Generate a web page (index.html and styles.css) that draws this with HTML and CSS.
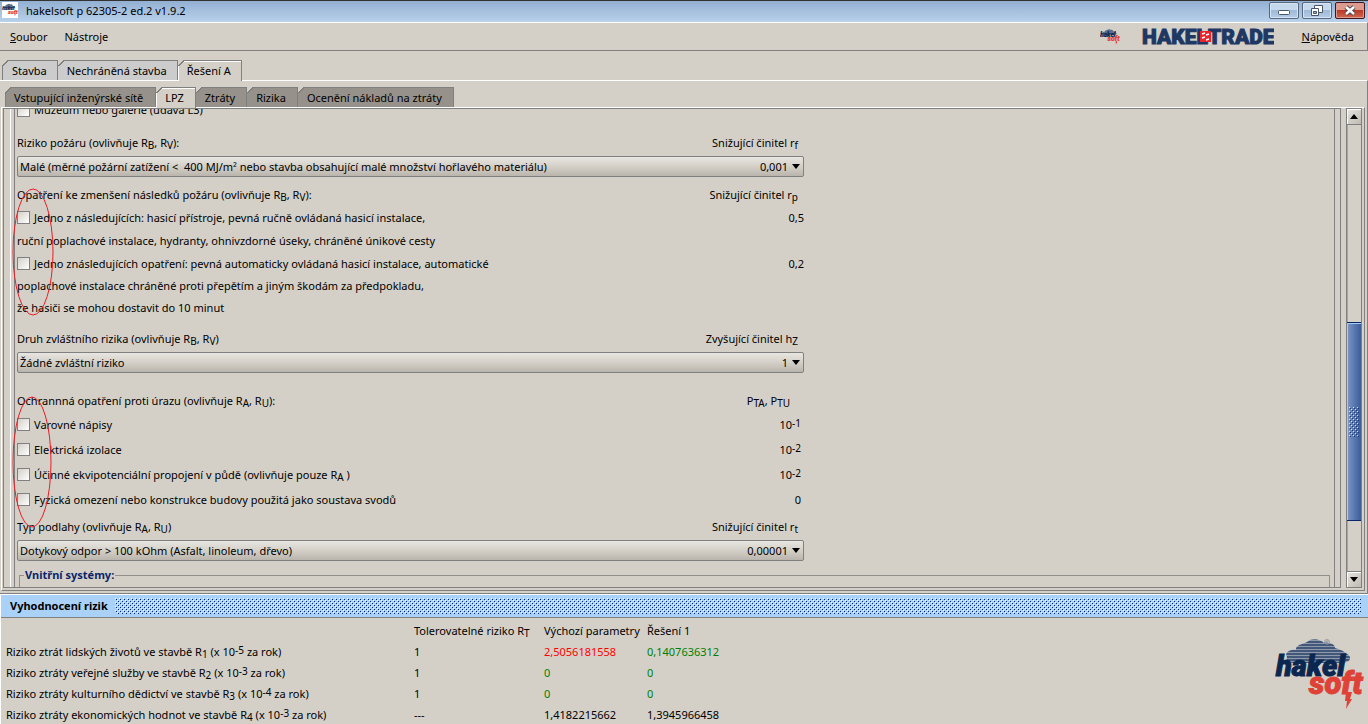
FILE: index.html
```html
<!DOCTYPE html>
<html lang="cs">
<head>
<meta charset="utf-8">
<title>hakelsoft p 62305-2 ed.2 v1.9.2</title>
<link rel="stylesheet" href="styles.css">
</head>
<body>
<svg class="defs" aria-hidden="true">
  <defs>
    <pattern id="stripes" width="4" height="3" patternUnits="userSpaceOnUse"><rect width="4" height="3" fill="#8e9aa9"/><rect width="4" height="2" fill="#42577a"/></pattern>
    <pattern id="grip" width="4" height="4" patternUnits="userSpaceOnUse"><path fill="#fff" d="M0 0h1v1H0zM2 2h1v1H2z"/><path fill="#0a246a" d="M1 1h1v1H1zM3 3h1v1H3z"/></pattern>
    <symbol id="logo" viewBox="0 0 90 72">
      <path d="M12 19C9 15 15 11 21 12 20 7 28 6 32 4c6-5 14-2 17 1 9-1 11 3 11 5 9 3 12 5 15 9 1 5-6 6-10 6H20c-6 0-9-2-8-6z" fill="url(#stripes)"/>
      <text x="1" y="38" font-size="29" fill="#0b2750" stroke="#0b2750">hakel</text>
      <text x="34" y="56" font-size="31" fill="#df4136" stroke="#df4136">soft</text>
      <path d="M71 54h6l-2 7h2l-6 10 1-8h-2z" fill="#df4136"/>
      <circle cx="52" cy="4" r="2.500" fill="none" stroke="#7c8797" stroke-width=".7"/>
      <path d="M51 6V3h2v1l-2 1 2 1" fill="none" stroke="#7c8797" stroke-width=".6"/>
    </symbol>
  </defs>
</svg>
<header class="titlebar">
  <svg class="app-icon" viewBox="0 -9 90 90"><rect y="-9" width="90" height="90" fill="#fff"/><use href="#logo" width="90" height="72"/></svg>
  <h1>hakelsoft p 62305-2 ed.2 v1.9.2</h1>
  <div class="window-buttons">
    <button aria-label="Minimalizovat"><svg viewBox="0 0 28 15"><rect x="8.500" y="7.500" width="11" height="4" rx="1" fill="#fff" stroke="#4b5568"/></svg></button>
    <button aria-label="Obnovit"><svg viewBox="0 0 28 15"><path d="M11.500 2.500h8v7h-8z" fill="#fff" stroke="#4b5568"/><path d="M8.500 5.500h7v7h-7z" fill="#fff" stroke="#4b5568"/><path d="M10.500 8.500h3v2h-3z" fill="#8fb0d8" stroke="#4b5568"/></svg></button>
    <button class="close" aria-label="Zavřít"><svg viewBox="0 0 28 15"><path d="M10 4l8 7M18 4l-8 7" stroke="#4b4550" stroke-width="4.500"/><path d="M10 4l8 7M18 4l-8 7" stroke="#fff" stroke-width="2.500"/></svg></button>
  </div>
</header>
<nav class="menubar">
  <button><u>S</u>oubor</button>
  <button>Nástroje</button>
  <span class="spacer"></span>
  <svg class="mini-logo" viewBox="0 0 90 72"><use href="#logo" width="90" height="72"/></svg>
  <svg class="trade-logo" viewBox="0 0 132 22">
    <text x="0" y="18">HAKEL</text><text x="66" y="18">TRADE</text>
    <rect x="58" y="5" width="11" height="11" fill="#e8252b"/>
    <path d="M60 8l3-1M64 9l3-1M60 12l3-1M64 14l3-1" stroke="#fff" stroke-width="1.500"/>
  </svg>
  <button><u>N</u>ápověda</button>
</nav>
<div class="tabs outer-tabs" role="tablist">
  <button role="tab">Stavba</button>
  <button role="tab">Nechráněná stavba</button>
  <button role="tab" aria-selected="true">Řešení A</button>
</div>
<main class="workspace">
  <div class="tabs inner-tabs" role="tablist">
    <button role="tab">Vstupující inženýrské sítě</button>
    <button role="tab" aria-selected="true">LPZ</button>
    <button role="tab">Ztráty</button>
    <button role="tab">Rizika</button>
    <button role="tab">Ocenění nákladů na ztráty</button>
  </div>
  <div class="panel">
    <div class="viewport">
      <form class="form">
        <div class="row clipped"><label><input type="checkbox">Muzeum nebo galerie (udává L3)</label></div>

        <div class="row head first"><label for="fire">Riziko požáru (ovlivňuje R<sub>B</sub>, R<sub>V</sub>):</label><span>Snižující činitel r<sub>f</sub></span></div>
        <div class="combo">
          <select id="fire"><option>Malé (měrné požární zatížení &lt; &nbsp;400 MJ/m² nebo stavba obsahující malé množství hořlavého materiálu)</option></select>
          <output>0,001</output><svg viewBox="0 0 8 5"><path d="M0 0h8L4 5z"/></svg>
        </div>

        <div class="row head measures"><span>Opatření ke zmenšení následků požáru (ovlivňuje R<sub>B</sub>, R<sub>V</sub>):</span><span>Snižující činitel r<sub>p</sub></span></div>
        <div class="row"><label><input type="checkbox">Jedno z následujících: hasicí přístroje, pevná ručně ovládaná hasicí instalace,</label><span>0,5</span></div>
        <p class="row">ruční poplachové instalace, hydranty, ohnivzdorné úseky, chráněné únikové cesty</p>
        <div class="row"><label><input type="checkbox">Jedno znásledujících opatření: pevná automaticky ovládaná hasicí instalace, automatické</label><span>0,2</span></div>
        <p class="row tight">poplachové instalace chráněné proti přepětím a jiným škodám za předpokladu,</p>
        <p class="row tight">že hasiči se mohou dostavit do 10 minut</p>

        <div class="row head special"><label for="special">Druh zvláštního rizika (ovlivňuje R<sub>B</sub>, R<sub>V</sub>)</label><span>Zvyšující činitel h<sub>Z</sub></span></div>
        <div class="combo">
          <select id="special"><option>Žádné zvláštní riziko</option></select>
          <output>1</output><svg viewBox="0 0 8 5"><path d="M0 0h8L4 5z"/></svg>
        </div>

        <div class="row head injury"><span>Ochrannná opatření proti úrazu (ovlivňuje R<sub>A</sub>, R<sub>U</sub>):</span><span>P<sub>TA</sub>, P<sub>TU</sub></span></div>
        <div class="row tall"><label><input type="checkbox">Varovné nápisy</label><span>10<sup>-1</sup></span></div>
        <div class="row tall"><label><input type="checkbox">Elektrická izolace</label><span>10<sup>-2</sup></span></div>
        <div class="row tall"><label><input type="checkbox"><span>Účinné ekvipotenciální propojení v půdě (ovlivňuje pouze R<sub>A</sub> )</span></label><span>10<sup>-2</sup></span></div>
        <div class="row tall"><label><input type="checkbox">Fyzická omezení nebo konstrukce budovy použitá jako soustava svodů</label><span>0</span></div>

        <div class="row head floor"><label for="floor">Typ podlahy (ovlivňuje R<sub>A</sub>, R<sub>U</sub>)</label><span>Snižující činitel r<sub>t</sub></span></div>
        <div class="combo">
          <select id="floor"><option>Dotykový odpor &gt; 100 kOhm (Asfalt, linoleum, dřevo)</option></select>
          <output>0,00001</output><svg viewBox="0 0 8 5"><path d="M0 0h8L4 5z"/></svg>
        </div>
        <fieldset><legend>Vnitřní systémy:</legend></fieldset>
      </form>
      <svg class="marks" viewBox="0 0 60 480"><ellipse cx="29" cy="143" rx="20" ry="63"/><ellipse cx="28" cy="353" rx="19" ry="65"/></svg>
    </div>
    <div class="scrollbar">
      <button type="button" aria-label="Nahoru"><svg viewBox="0 0 8 5"><path d="M0 5h8L4 0z"/></svg></button>
      <div class="track"><div class="thumb"><svg width="10" height="30"><rect width="10" height="30" fill="url(#grip)" opacity=".75"/></svg></div></div>
      <button type="button" aria-label="Dolů"><svg viewBox="0 0 8 5"><path d="M0 0h8L4 5z"/></svg></button>
    </div>
  </div>
</main>
<section class="results">
  <header><h2>Vyhodnocení rizik</h2><svg class="dots" width="100%" height="16"><rect width="100%" height="16" fill="url(#grip)"/></svg></header>
  <div class="results-body">
    <table>
      <thead><tr><th class="name"></th><th class="limit">Tolerovatelné riziko R<sub>T</sub></th><th class="base">Výchozí parametry</th><th>Řešení 1</th></tr></thead>
      <tbody>
        <tr><td>Riziko ztrát lidských životů ve stavbě R<sub>1</sub> (x 10<sup>-5</sup> za rok)</td><td>1</td><td class="bad">2,5056181558</td><td class="good">0,1407636312</td></tr>
        <tr><td>Riziko ztráty veřejné služby ve stavbě R<sub>2</sub> (x 10<sup>-3</sup> za rok)</td><td>1</td><td class="good">0</td><td class="good">0</td></tr>
        <tr><td>Riziko ztráty kulturního dědictví ve stavbě R<sub>3</sub> (x 10<sup>-4</sup> za rok)</td><td>1</td><td class="good">0</td><td class="good">0</td></tr>
        <tr><td>Riziko ztráty ekonomických hodnot ve stavbě R<sub>4</sub> (x 10<sup>-3</sup> za rok)</td><td>---</td><td>1,4182215662</td><td>1,3945966458</td></tr>
      </tbody>
    </table>
    <svg class="brand" viewBox="0 0 90 72" role="img" aria-label="hakelsoft"><use href="#logo" width="90" height="72"/></svg>
  </div>
</section>
</body>
</html>
```
FILE: styles.css
```css
* { box-sizing: border-box; }
html { height: 100%; }
body {
  margin: 0; height: 100%; overflow: hidden;
  display: flex; flex-direction: column;
  background: #d4d0c8; color: #000;
  font: 11px/16px "Noto Sans", "Open Sans", sans-serif;
}
button, select, input { font: inherit; color: inherit; }
button { border: 0; padding: 0; background: none; }
h1, h2, p { margin: 0; font-size: 11px; }
h1 { font-weight: 400; }
sub, sup { font-size: 10px; line-height: 0; }
sub { vertical-align: -2px; }
sup { vertical-align: 2px; }
.defs { position: absolute; width: 0; height: 0; }
#logo text { font-family: Roboto, sans-serif; font-weight: 900; font-style: italic; stroke-width: 1; }

.titlebar {
  flex: none; height: 22px; display: flex; align-items: flex-start; gap: 8px; padding: 1px 3px 0 2px;
  border-top: 1px solid #333; background: linear-gradient(#93b0d2, #b9d1ea);
}
.app-icon { width: 16px; height: 16px; }
.titlebar h1 { flex: 1; line-height: 18px; }
.window-buttons { display: flex; gap: 3px; }
.window-buttons button {
  width: 30px; height: 17px; border: 1px solid #56677e; border-radius: 2px;
  box-shadow: inset 0 0 0 1px #d5e4f4; background: linear-gradient(#c5d8ec 45%, #9fbad8 50%, #b5cce6);
}
.window-buttons .close { border-color: #43141a; box-shadow: inset 0 0 0 1px #dc9c93; background: linear-gradient(#dd9b8e 45%, #b93a25 50%, #cf6850); }
.window-buttons svg { display: block; width: 28px; height: 15px; }

.menubar {
  flex: none; height: 29px; display: flex; align-items: center; padding: 0 13px 0 10px;
  border: 1px solid #808080; border-width: 1px 1px 1px 0; border-top-color: #fff;
}
.menubar button + button { margin-left: 17px; }
.spacer { flex: 1; }
.mini-logo { width: 20px; height: 16px; margin-right: 22px; }
.trade-logo { width: 132px; height: 22px; margin-right: 28px; }
.trade-logo text { font: 900 21px Roboto, sans-serif; fill: #1f3763; stroke: #1f3763; stroke-width: 1; }

.tabs { flex: none; display: flex; align-items: flex-end; }
.tabs button {
  position: relative; height: 20px; padding: 0 10px 0 9px;
  border: 1px solid #808080; border-bottom: 0; border-left: 0; background: #ccc; white-space: nowrap;
}
.tabs button::before {
  content: ""; position: absolute; left: 0; top: -1px; width: 6px; height: 6px;
  background: linear-gradient(135deg, #d4d0c8 45%, #808080 46%, #808080 60%, transparent 61%);
}
.tabs button:first-child { border-left: 1px solid #808080; }
.tabs button:first-child::before { left: -1px; }
.tabs button[aria-selected="true"] { background: #d4d0c8; height: 21px; margin-bottom: -1px; box-shadow: inset 1px 1px #fff; }
.outer-tabs { height: 29px; padding-left: 2px; }
.inner-tabs { height: 26px; padding: 0 4px; }
.inner-tabs button { background: #96928b; padding: 0 11px 0 9px; }
.inner-tabs button:first-child { padding: 0 12px 0 8px; }

.workspace {
  flex: none; display: flex; flex-direction: column; height: 514px; padding: 0 2px 2px 1px;
  border: 1px solid #808080; border-top-color: #fff; border-left: 0;
}
.panel {
  flex: 1; min-height: 0; display: flex; padding: 0 2px 2px 1px;
  border: 1px solid #808080; border-top-color: #fff; border-left-color: #fff;
}
.viewport {
  position: relative; flex: 1; min-width: 0; overflow: hidden; padding: 0 5px 0 6px;
  border: 1px solid #808080;
}
.form { border: solid #808080; border-width: 0 1px; box-shadow: -3px 0 #d4d0c8, -4px 0 #fff; padding: 0 4px 0 2px; height: 100%; margin-left: 4px; }
.row { display: flex; justify-content: space-between; align-items: center; max-width: 787px; height: 23px; white-space: nowrap; }
.row label { display: flex; align-items: center; white-space: pre; }
.clipped { height: 9px; align-items: flex-end; overflow: hidden; }
.clipped label { height: 16px; flex: none; }
.head { height: 22px; }
.head label { display: block; }
.head span:last-child { padding-right: 6px; }
.first { margin-top: 14px; }
.measures { margin-top: 7px; }
.tight { height: 22px; }
.special { margin-top: 9px; }
.injury { margin-top: 17px; }
.injury span:last-child { padding-right: 14px; }
.tall { height: 25px; }
.tall > span { padding-right: 3px; }
.floor { margin-top: 4px; }
input[type="checkbox"] {
  appearance: none; flex: none; width: 13px; height: 13px; margin: 0 4px 0 0;
  border: 1px solid #808080; background: linear-gradient(135deg, #d4d0c8, #fff);
}
.combo {
  position: relative; max-width: 787px; height: 21px; margin-top: 2px; display: flex; align-items: center;
  border: 1px solid #808080; border-radius: 2px; background: linear-gradient(#e8e6e1, #d4d0c8 50%, #bab5ac);
}
.combo select { appearance: none; flex: 1; min-width: 0; height: 19px; padding: 0 2px; border: 0; background: none; }
.combo svg { width: 8px; height: 5px; margin: 0 3px 0 4px; }
fieldset { margin: 6px 0 0 2px; padding: 0 4px; height: 30px; border: 1px solid #918f89; border-bottom: 0; }
legend { padding: 0 1px; color: #0a246a; font-weight: 700; }
.marks { position: absolute; left: 0; top: 0; width: 60px; height: 480px; pointer-events: none; }
.marks ellipse { fill: none; stroke: #ed1c24; }

.scrollbar { flex: none; width: 16px; margin-left: 5px; display: flex; flex-direction: column; border: 1px solid #808080; }
.scrollbar button {
  flex: none; height: 15px; display: flex; align-items: center; justify-content: center;
  box-shadow: inset 1px 1px #fff; background: linear-gradient(135deg, #e6e4df, #bfbbb2);
}
.scrollbar button svg { width: 8px; height: 5px; }
.track { flex: 1; display: flex; flex-direction: column; border: solid #808080; border-width: 1px 0; box-shadow: inset 1px 0 #aaa69e; }
.track::before { content: ""; flex: 198; }
.track::after { content: ""; flex: 50; }
.thumb {
  flex: 198; display: flex; align-items: center; justify-content: center;
  border: 1px solid #0a246a; border-width: 1px 0; box-shadow: inset 1px 1px #a6caf0;
  background: linear-gradient(90deg, #7d98c5, #3b5c9b);
}

.results { flex: 1; min-height: 0; display: flex; flex-direction: column; border-left: 1px solid #fff; border-top: 1px solid #fff; }
.results header { flex: none; height: 23px; display: flex; align-items: center; gap: 6px; padding: 0 7px 0 9px; background: #aad1f8; border-bottom: 1px solid #808080; }
.results h2 { flex: none; width: 99px; font-weight: 700; white-space: nowrap; }
.dots { flex: 1; min-width: 0; display: block; }
.results-body { flex: 1; min-height: 0; overflow: hidden; display: flex; justify-content: space-between; align-items: flex-start; padding: 2px 3px 0 5px; }
table { border-collapse: collapse; table-layout: fixed; width: 760px; }
th, td { height: 21px; padding: 0; text-align: left; font-weight: 400; white-space: nowrap; }
.name { width: 408px; }
.limit { width: 130px; }
.base { width: 103px; }
.bad { color: #f00; }
.good { color: #008000; }
.brand { flex: none; width: 90px; height: 72px; margin-top: 18px; }
```
